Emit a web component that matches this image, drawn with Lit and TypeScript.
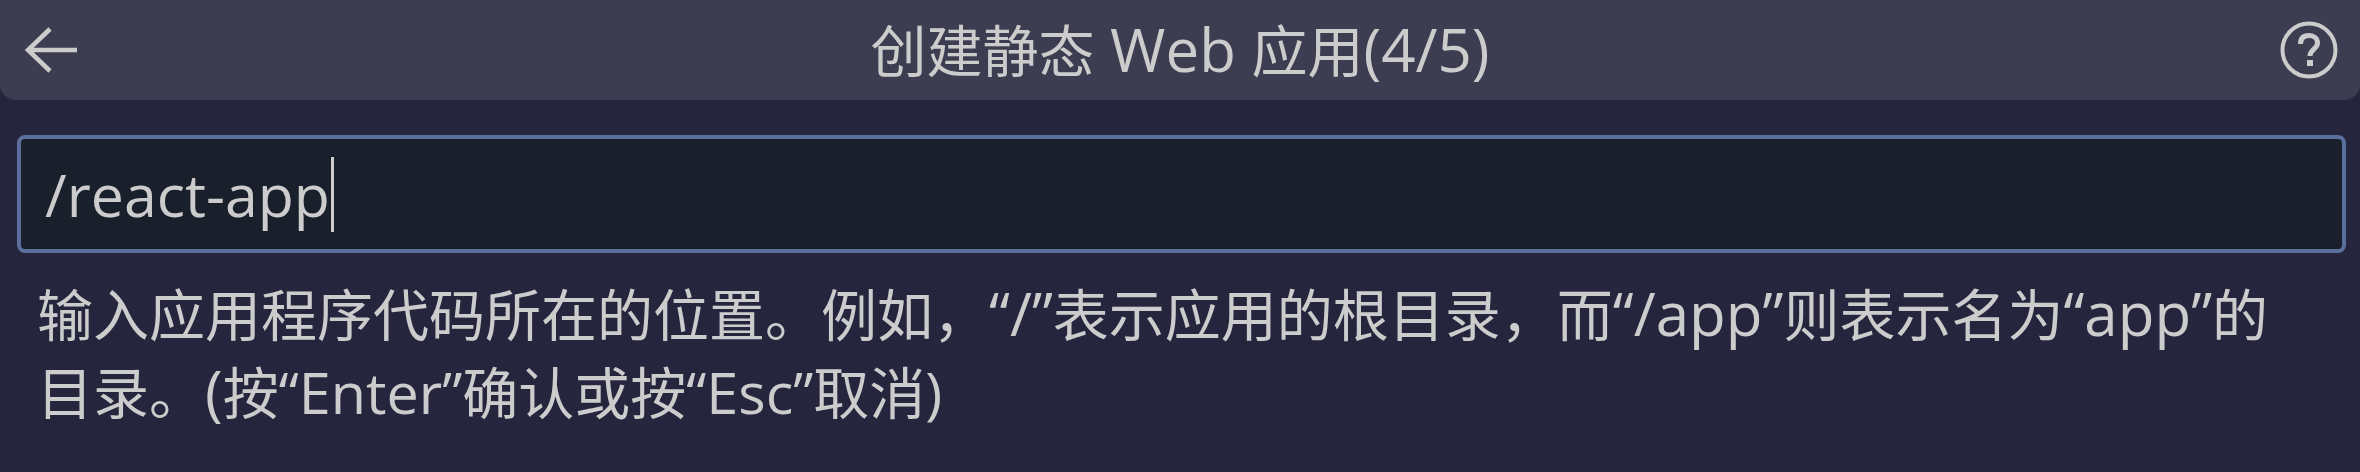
import { LitElement, html, css } from "lit";
import { customElement } from "lit/decorators.js";

@customElement("app-root")
export class AppRoot extends LitElement {
  static styles = css`
    :host {
      display: block;
      width: 2360px;
      height: 472px;
      background: #26253e;
      color: #cccccc;
      font-family: "Open Sans", "Noto Sans CJK SC", sans-serif;
      overflow: hidden;
    }
    .l, .s {
      display: inline-block;
      white-space: pre;
      line-height: 1;
    }
    .l { font-size: 60px; }
    .s { font-size: 57.5px; }
    .header {
      height: 100px;
      background: #3d3d52;
      border-radius: 0 0 16px 16px;
      display: flex;
      align-items: center;
      justify-content: space-between;
      padding: 0 24px;
      box-sizing: border-box;
      position: relative;
    }
    .title {
      position: absolute;
      left: 0;
      right: 0;
      text-align: center;
      font-size: 56px;
      line-height: 100px;
    }
    svg { display: block; position: relative; }
    .input {
      margin: 35px 14px 0 17px;
      height: 118px;
      box-sizing: border-box;
      border: 4px solid #5a6f9b;
      border-radius: 8px;
      background: #1a1f2c;
      display: flex;
      align-items: center;
      padding-left: 24px;
      font-size: 59px;
    }
    .caret {
      width: 3px;
      height: 75px;
      background: #cccccc;
      margin-left: 1px;
    }
    .hint {
      margin: 22px 0 0 37px;
      line-height: 78px;
      font-size: 56px;
      white-space: nowrap;
    }
  `;

  render() {
    return html`
      <div class="header">
        <div class="title">创建静态<span class="l"> Web </span>应用<span class="l">(4/5)</span></div>
        <svg width="54" height="48" viewBox="0 0 54 48" fill="none" stroke="#cccccc" stroke-width="4.5">
          <path d="M26 3 L4 24 L26 45 M4 24 H53" />
        </svg>
        <svg width="60" height="60" viewBox="0 0 60 60" fill="none" style="margin-right:-3px">
          <circle cx="30" cy="30" r="26.5" stroke="#cccccc" stroke-width="4" />
          <path d="M21.5 24 C21.5 18 25 15.5 30 15.5 C35 15.5 38.5 18.5 38.5 23 C38.5 29 31 29.5 31 36" stroke="#cccccc" stroke-width="5" />
          <path d="M28 40 H34 V46 H28 Z" fill="#cccccc" />
        </svg>
      </div>
      <div class="input"><span>/react-app</span><div class="caret"></div></div>
      <div class="hint">
        <div>输入应用程序代码所在的位置。例如，<span class="l">“/”</span>表示应用的根目录，而<span class="l">“/app”</span>则表示名为<span class="l">“app”</span>的</div>
        <div>目录。<span class="l">(</span>按<span class="s">“Enter”</span>确认或按<span class="s">“Esc”</span>取消<span class="s">)</span></div>
      </div>
    `;
  }
}
